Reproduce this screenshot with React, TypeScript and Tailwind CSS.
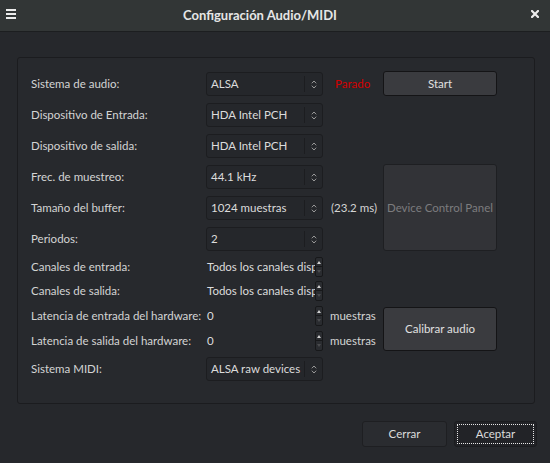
import React from "react";

const font = { fontFamily: 'Lato, "Noto Sans", sans-serif' };

function Arrows() {
  return (
    <svg width="6" height="9" viewBox="0 0 6 9" className="block">
      <path d="M0.8 3.3 L3 1 L5.2 3.3" fill="none" stroke="#9a9a9a" strokeWidth="1" />
      <path d="M0.8 5.7 L3 8 L5.2 5.7" fill="none" stroke="#9a9a9a" strokeWidth="1" />
    </svg>
  );
}

function Combo({ value }: { value: string }) {
  return (
    <div className="flex h-[24px] w-[117px] items-center rounded-[3px] border border-[#1c1d20] bg-[#25272b]">
      <span className="flex-1 truncate whitespace-nowrap pl-[4px] text-[11.5px] text-[#dcdcdc]">{value}</span>
      <div className="h-[16px] w-px bg-[#1c1d20]" />
      <div className="flex w-[17px] justify-center">
        <Arrows />
      </div>
    </div>
  );
}

function Spin() {
  return (
    <div className="flex h-[20px] w-[8px] shrink-0 flex-col overflow-hidden rounded-[2px] border border-[#17181a] bg-[#2a2c30]">
      <div className="flex h-1/2 items-center justify-center border-b border-[#17181a]">
        <svg width="4" height="3" viewBox="0 0 4 3" className="block">
          <path d="M0 3 L2 0 L4 3 Z" fill="#d0d0d0" />
        </svg>
      </div>
      <div className="flex h-1/2 items-center justify-center">
        <svg width="4" height="3" viewBox="0 0 4 3" className="block">
          <path d="M0 0 L2 3 L4 0 Z" fill="#4a4b4e" />
        </svg>
      </div>
    </div>
  );
}

function Entry({ value }: { value: string }) {
  return (
    <div className="flex h-[20px] w-[117px] items-center">
      <div className="w-[109px] shrink-0 overflow-hidden">
        <span className="block w-[200px] whitespace-nowrap pl-[1px] text-[11.5px] text-[#dcdcdc]">{value}</span>
      </div>
      <Spin />
    </div>
  );
}

function Label({ children }: { children: React.ReactNode }) {
  return <div className="w-[175px] shrink-0 whitespace-nowrap text-[11.5px] text-[#d4d4d4]">{children}</div>;
}

export default function App() {
  return (
    <div style={font} className="flex h-[463px] w-[550px] flex-col bg-[#26282c]">
      <div className="relative flex h-[32px] shrink-0 items-center justify-center border-b border-[#1c1e20] bg-[#323636] pr-[30px]">
        <div className="absolute left-[6px] top-[9px] flex w-[10px] flex-col gap-[2px]">
          <div className="h-[2px] bg-[#ececec]" />
          <div className="h-[2px] bg-[#ececec]" />
          <div className="h-[2px] bg-[#ececec]" />
        </div>
        <span className="text-[13px] font-bold text-[#e6e6e6]">Configuración Audio/MIDI</span>
        <svg className="absolute left-[531px] top-[10px]" width="8" height="8" viewBox="0 0 8 8">
          <path d="M1 1 L7 7 M7 1 L1 7" stroke="#ececec" strokeWidth="2.2" strokeLinecap="square" />
        </svg>
      </div>

      <div className="ml-[17px] mt-[25px] flex h-[347px] w-[518px] rounded-[3px] border border-[#1b1c1f] bg-[#27292d] pl-[13px] pt-[14px]">
        <div className="flex w-[352px] shrink-0 flex-col">
          <div className="flex h-[24px] items-center">
            <Label>Sistema de audio:</Label>
            <Combo value="ALSA" />
            <span className="ml-[12px] text-[11.5px] text-[#d40000]">Parado</span>
          </div>
          <div className="mt-[7px] flex h-[24px] items-center">
            <Label>Dispositivo de Entrada:</Label>
            <Combo value="HDA Intel PCH" />
          </div>
          <div className="mt-[7px] flex h-[24px] items-center">
            <Label>Dispositivo de salida:</Label>
            <Combo value="HDA Intel PCH" />
          </div>
          <div className="mt-[7px] flex h-[24px] items-center">
            <Label>Frec. de muestreo:</Label>
            <Combo value="44.1 kHz" />
          </div>
          <div className="mt-[7px] flex h-[24px] items-center">
            <Label>Tamaño del buffer:</Label>
            <Combo value="1024 muestras" />
            <span className="ml-[8px] whitespace-nowrap text-[11.5px] text-[#d4d4d4]">(23.2 ms)</span>
          </div>
          <div className="mt-[7px] flex h-[24px] items-center">
            <Label>Periodos:</Label>
            <Combo value="2" />
          </div>
          <div className="mt-[6px] flex h-[20px] items-center">
            <Label>Canales de entrada:</Label>
            <Entry value="Todos los canales disponibles" />
          </div>
          <div className="mt-[4px] flex h-[20px] items-center">
            <Label>Canales de salida:</Label>
            <Entry value="Todos los canales disponibles" />
          </div>
          <div className="mt-[5px] flex h-[20px] items-center">
            <Label>Latencia de entrada del hardware:</Label>
            <Entry value="0" />
            <span className="ml-[7px] text-[11.5px] text-[#d4d4d4]">muestras</span>
          </div>
          <div className="mt-[5px] flex h-[20px] items-center">
            <Label>Latencia de salida del hardware:</Label>
            <Entry value="0" />
            <span className="ml-[7px] text-[11.5px] text-[#d4d4d4]">muestras</span>
          </div>
          <div className="mt-[6px] flex h-[24px] items-center">
            <Label>Sistema MIDI:</Label>
            <Combo value="ALSA raw devices" />
          </div>
        </div>

        <div className="flex w-[114px] shrink-0 flex-col">
          <button className="-mt-[1px] flex h-[25px] items-center justify-center rounded-[3px] border border-[#141416] bg-[#3a3b3f] text-[11.5px] text-[#e0e0e0]">
            Start
          </button>
          <button className="mt-[68px] flex h-[87px] items-center justify-center whitespace-nowrap rounded-[3px] border border-[#1e1f22] bg-[#323337] text-[11.5px] text-[#7c7c7e]">
            Device Control Panel
          </button>
          <button className="mt-[56px] flex h-[44px] items-center justify-center rounded-[3px] border border-[#141416] bg-[#3a3b3f] text-[11.5px] text-[#e0e0e0]">
            Calibrar audio
          </button>
        </div>
      </div>

      <div className="mt-[17px] flex justify-end gap-[7px] pr-[13px]">
        <button className="flex h-[26px] w-[85px] items-center justify-center rounded-[3px] border border-[#1e1f22] bg-[#2a2c30] text-[11.5px] text-[#dcdcdc]">
          Cerrar
        </button>
        <button className="flex h-[26px] w-[83px] items-center justify-center rounded-[3px] border border-[#1b1c1f] bg-[#222327] p-[2px] text-[11.5px] text-[#dcdcdc]">
          <span className="flex h-full w-full items-center justify-center border border-dotted border-[#e6e6e6]">Aceptar</span>
        </button>
      </div>
    </div>
  );
}
